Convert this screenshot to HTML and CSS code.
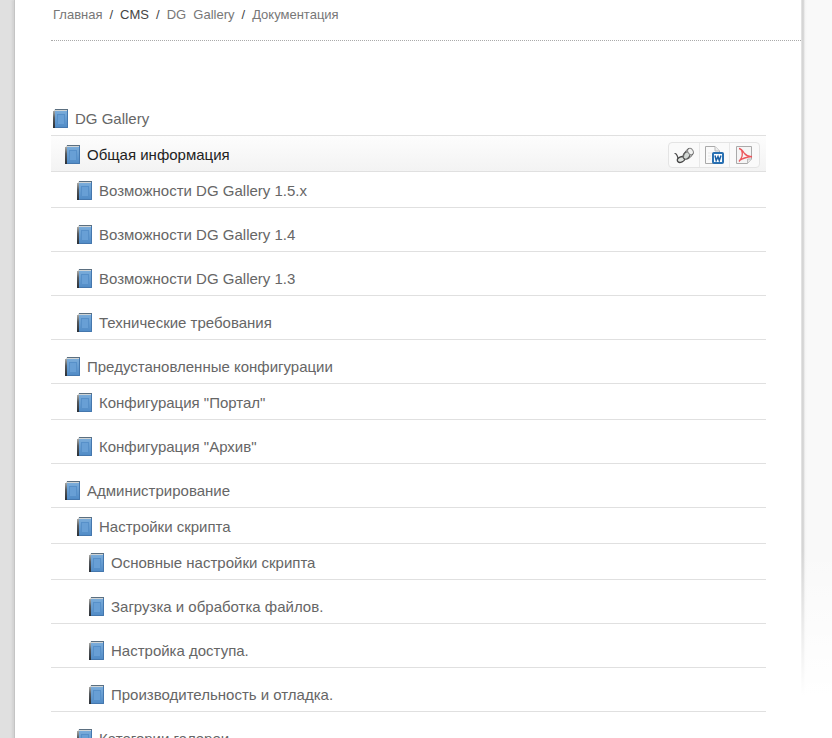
FILE: index.html
```html
<!DOCTYPE html>
<html lang="ru">
<head>
<meta charset="utf-8">
<title>DG Gallery - Документация</title>
<link rel="stylesheet" href="styles.css">
</head>
<body>
<svg class="sprite" aria-hidden="true">
  <defs>
    <linearGradient id="cover" x1="0" y1="0" x2="0" y2="1">
      <stop offset="0" stop-color="#7aacda"/>
      <stop offset="1" stop-color="#4f8ac6"/>
    </linearGradient>
    <linearGradient id="spine" x1="0" y1="0" x2="0" y2="1">
      <stop offset="0" stop-color="#a8a8a4"/>
      <stop offset="0.4" stop-color="#55595d"/>
      <stop offset="1" stop-color="#2b3036"/>
    </linearGradient>
    <symbol id="book" viewBox="0 0 15 19">
      <path d="M0 3 2 0H15V3z" fill="#cfd4d6"/>
      <path d="M2 0.500H15" stroke="#5b6f80"/>
      <rect x="0" y="2" width="3" height="17" fill="url(#spine)"/>
      <rect x="2" y="2" width="13" height="17" fill="url(#cover)"/>
      <path d="M14.500 1V18.500H2" fill="none" stroke="#4577ad"/>
      <rect x="4.500" y="5.500" width="7" height="10" fill="#689fd5" stroke="#5790c9"/>
    </symbol>
  </defs>
</svg>
<div class="layout">
  <main class="page">
    <nav class="crumbs" aria-label="Навигация">
      <a href="#">Главная</a><span>/</span><a class="strong" href="#">CMS</a><span>/</span><a href="#">DG&nbsp; Gallery</a><span>/</span><a href="#">Документация</a>
    </nav>
    <ul class="tree">
      <li>
        <div class="row"><svg class="book"><use href="#book"/></svg><a href="#">DG Gallery</a></div>
        <ul>
          <li>
            <div class="row level-1 active"><svg class="book"><use href="#book"/></svg><a href="#">Общая информация</a>
              <div class="tools">
                <button type="button" aria-label="Просмотр">
                  <svg viewBox="0 0 20 20" fill="none" stroke-linecap="round">
                    <path d="M1 8.500Q2.500 8.500 3.500 11.500Q4.500 14 4.500 16" stroke="#444" stroke-width="1.200"/>
                    <ellipse cx="7" cy="14.500" rx="3.800" ry="2.600" transform="rotate(-25 7 14.500)" fill="#dfe3e0" stroke="#444" stroke-width="1.300"/>
                    <ellipse cx="12.500" cy="10.500" rx="4" ry="3" transform="rotate(-50 12.500 10.500)" fill="#d3d8d5" stroke="#555" stroke-width="1.300"/>
                    <ellipse cx="16.500" cy="6.500" rx="2.600" ry="3.400" transform="rotate(-30 16.500 6.500)" fill="#f1f2f1" stroke="#888"/>
                    <path d="M9.500 12.500 10 8.500Q12 5 14.500 3.500M14 14Q17 12.500 19 9" stroke="#666"/>
                  </svg>
                </button>
                <button type="button" aria-label="Word">
                  <svg viewBox="0 0 20 20">
                    <path d="M0.500 1.500H10L14.500 6V18.500H0.500z" fill="#fafafa" stroke="#aaa"/>
                    <path d="M10 1.500V6H14.500" fill="#eee" stroke="#bbb"/>
                    <path d="M3 8H7M3 11H6M3 14H6" stroke="#e6e6e6"/>
                    <rect x="7.500" y="7.500" width="11" height="11" rx="1" fill="#2673b8" stroke="#2b6dac"/>
                    <rect x="9" y="9" width="8" height="8" fill="#fff"/>
                    <path d="M10 10.500 11.200 15.500 13 11.500 14.300 15.500 16 10.500" fill="none" stroke="#1b60a5" stroke-width="1.500"/>
                  </svg>
                </button>
                <button type="button" aria-label="PDF">
                  <svg viewBox="0 0 20 20">
                    <path d="M1.500 1.500H16.500V14L12.500 18.500H1.500z" fill="#f5f5f5" stroke="#aaa"/>
                    <path d="M16.500 14H12.500V18.500" fill="#e4e4e4" stroke="#bbb"/>
                    <path d="M4 3.500Q6.500 4 9.500 8.500Q12 11.500 17 12M6.500 5Q9 11 4 16.500M4.500 15.500Q8.500 12.500 17 11.500" fill="none" stroke="#ec555b" stroke-width="1.300"/>
                  </svg>
                </button>
              </div>
            </div>
            <ul>
              <li class="leaf"><div class="row level-2"><svg class="book"><use href="#book"/></svg><a href="#">Возможности DG Gallery 1.5.x</a></div></li>
              <li class="leaf"><div class="row level-2"><svg class="book"><use href="#book"/></svg><a href="#">Возможности DG Gallery 1.4</a></div></li>
              <li class="leaf"><div class="row level-2"><svg class="book"><use href="#book"/></svg><a href="#">Возможности DG Gallery 1.3</a></div></li>
              <li class="leaf"><div class="row level-2"><svg class="book"><use href="#book"/></svg><a href="#">Технические требования</a></div></li>
            </ul>
          </li>
          <li>
            <div class="row level-1"><svg class="book"><use href="#book"/></svg><a href="#">Предустановленные конфигурации</a></div>
            <ul>
              <li class="leaf"><div class="row level-2"><svg class="book"><use href="#book"/></svg><a href="#">Конфигурация "Портал"</a></div></li>
              <li class="leaf"><div class="row level-2"><svg class="book"><use href="#book"/></svg><a href="#">Конфигурация "Архив"</a></div></li>
            </ul>
          </li>
          <li>
            <div class="row level-1"><svg class="book"><use href="#book"/></svg><a href="#">Администрирование</a></div>
            <ul>
              <li>
                <div class="row level-2"><svg class="book"><use href="#book"/></svg><a href="#">Настройки скрипта</a></div>
                <ul>
                  <li class="leaf"><div class="row level-3"><svg class="book"><use href="#book"/></svg><a href="#">Основные настройки скрипта</a></div></li>
                  <li class="leaf"><div class="row level-3"><svg class="book"><use href="#book"/></svg><a href="#">Загрузка и обработка файлов.</a></div></li>
                  <li class="leaf"><div class="row level-3"><svg class="book"><use href="#book"/></svg><a href="#">Настройка доступа.</a></div></li>
                  <li class="leaf"><div class="row level-3"><svg class="book"><use href="#book"/></svg><a href="#">Производительность и отладка.</a></div></li>
                </ul>
              </li>
              <li class="leaf"><div class="row level-2"><svg class="book"><use href="#book"/></svg><a href="#">Категории галереи</a></div></li>
            </ul>
          </li>
        </ul>
      </li>
    </ul>
  </main>
  <div class="edge"></div>
</div>
</body>
</html>
```

FILE: styles.css
```css
body {
  margin: 0;
  height: 100vh;
  overflow: hidden;
  background: #fff;
  font-family: "Liberation Sans", Arial, sans-serif;
  font-size: 15px;
  color: #666;
}

a {
  color: inherit;
  text-decoration: none;
}

ul {
  margin: 0;
  padding: 0;
  list-style: none;
}

.sprite {
  display: block;
  width: 0;
  height: 0;
}

.layout {
  display: grid;
  grid-template-columns: 1fr 31px;
  min-height: 100vh;
  border-left: 14px solid #e0e0e0;
}

.page {
  padding-left: 36px;
  border-left: 1px solid #c4c4c4;
  box-shadow: -2px 0 2px #d2d2d2;
}

.edge {
  height: 700px;
  background:
    linear-gradient(to bottom, transparent 550px, #fff 695px),
    linear-gradient(to right, #e8e8e8, #cfcfcf 2px, #f4f4f4 4px, #f9f9f9 6px);
}

.crumbs {
  display: flex;
  gap: 7px;
  height: 40px;
  padding-left: 2px;
  border-bottom: 1px dotted #aaa;
  font-size: 13px;
  line-height: 29px;
  color: #777;
}

.crumbs span,
.crumbs .strong {
  color: #444;
}

.tree {
  margin: 59px 35px 0 0;
}

.tree ul {
  margin: 0;
}

.row {
  display: flex;
  align-items: center;
  gap: 7px;
  box-sizing: border-box;
  height: 36px;
  padding-top: 2px;
  padding-left: 2px;
  border-bottom: 1px solid #e0e0e0;
}

.row.level-1 {
  padding-left: 14px;
}

.row.level-2 {
  padding-left: 26px;
}

.row.level-3 {
  padding-left: 38px;
}

.leaf {
  padding-bottom: 8px;
}

.book {
  flex: none;
  width: 15px;
  height: 19px;
}

.active {
  background: linear-gradient(#fdfdfd, #f3f3f3);
  color: #222;
}

.tools {
  display: flex;
  margin-left: auto;
  margin-right: 6px;
  border: 1px solid #e4e4e4;
  border-radius: 4px;
  background: #fafafa;
}

.tools button {
  display: flex;
  align-items: center;
  justify-content: center;
  width: 30px;
  height: 24px;
  padding: 0;
  border: 0;
  border-left: 1px solid #e8e8e8;
  background: none;
}

.tools button:first-child {
  border-left: 0;
}

.tools svg {
  width: 20px;
  height: 20px;
}
```
